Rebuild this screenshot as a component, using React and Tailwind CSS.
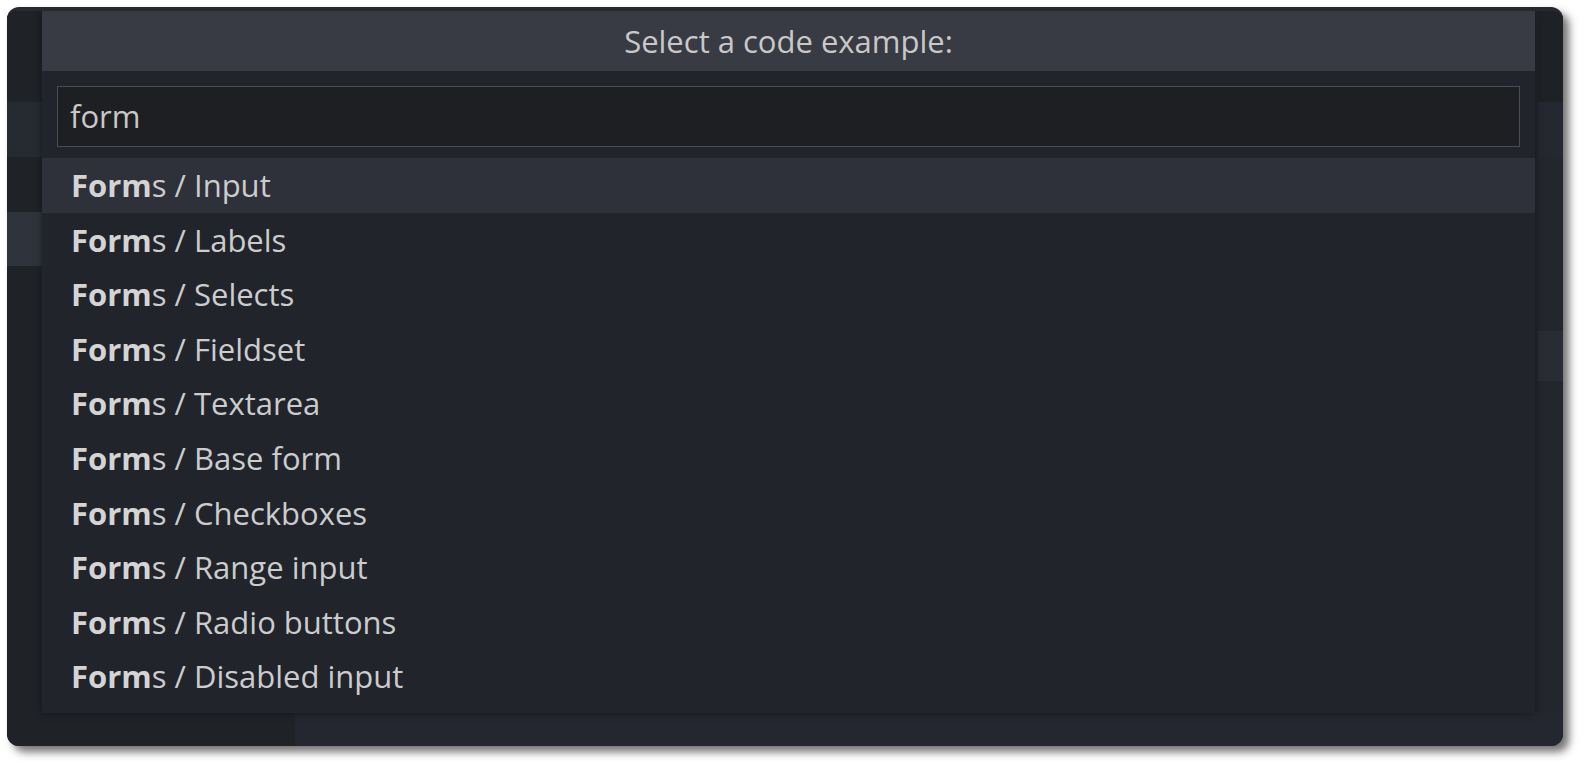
import React from 'react';

const ITEMS = [
  'Input', 'Labels', 'Selects', 'Fieldset', 'Textarea',
  'Base form', 'Checkboxes', 'Range input', 'Radio buttons', 'Disabled input',
];

// editor line highlights peeking out beside the quick pick
const LEFT_BANDS = [
  { h: 91,  c: 'bg-[#1f2227]' },
  { h: 55,  c: 'bg-[#262a31]' },
  { h: 55,  c: 'bg-[#1f2227]' },
  { h: 54,  c: 'bg-[#2f333b]' },
];
const RIGHT_BANDS = [
  { h: 91,  c: 'bg-[#1e2126]' },
  { h: 55,  c: 'bg-[#252830]' },
  { h: 174, c: 'bg-[#23262d]' },
  { h: 50,  c: 'bg-[#292c35]' },
];

export default function App() {
  return (
    <div className="w-[1586px] h-[770px] bg-white pl-[7px] pt-[7px] font-['Open_Sans','Noto_Sans',sans-serif]">
      <div className="relative w-[1556px] h-[739px] rounded-[12px] overflow-hidden bg-[#22252c] shadow-[6px_6px_8px_rgba(0,0,0,0.55)] border-t-4 border-[#27292d]">
        {/* Editor background */}
        <div className="flex h-[702px]">
          <div className="w-[35px] flex flex-col bg-[#1f2227]">
            {LEFT_BANDS.map((b, i) => (
              <div key={i} className={b.c} style={{ height: b.h }} />
            ))}
          </div>
          <div className="flex-1 bg-[#22252c]" />
          <div className="w-[25px] flex flex-col bg-[#23262d]">
            {RIGHT_BANDS.map((b, i) => (
              <div key={i} className={b.c} style={{ height: b.h }} />
            ))}
          </div>
        </div>
        <div className="flex h-[33px]">
          <div className="w-[288px] bg-[#1f2227]" />
          <div className="flex-1 bg-[#242730]" />
        </div>

        {/* Quick pick */}
        <div className="absolute left-[35px] top-0 w-[1493px] h-[702px] bg-[#21242b] shadow-[0_0_8px_rgba(0,0,0,0.4)]">
          <div className="h-[60px] bg-[#383b43] flex items-center justify-center text-[31px] text-[#c8c8c8]">
            Select a code example:
          </div>
          <div className="pt-[15px] px-[15px]">
            <div className="h-[61px] border border-[#474c57] bg-[#1e1f23] pl-[12px] flex items-center text-[31px] text-[#c8c8c8]">
              form
            </div>
          </div>
          <div className="mt-[11px]">
            {ITEMS.map((it, i) => (
              <div key={it}
                className={`h-[54.6px] pl-[29px] flex items-center text-[31px] text-[#cccccc] whitespace-pre ${i === 0 ? 'bg-[#2e313a]' : ''}`}>
                <span className="font-bold text-[#d4d4d4]">Form</span>s / {it}
              </div>
            ))}
          </div>
        </div>
      </div>
    </div>
  );
}
